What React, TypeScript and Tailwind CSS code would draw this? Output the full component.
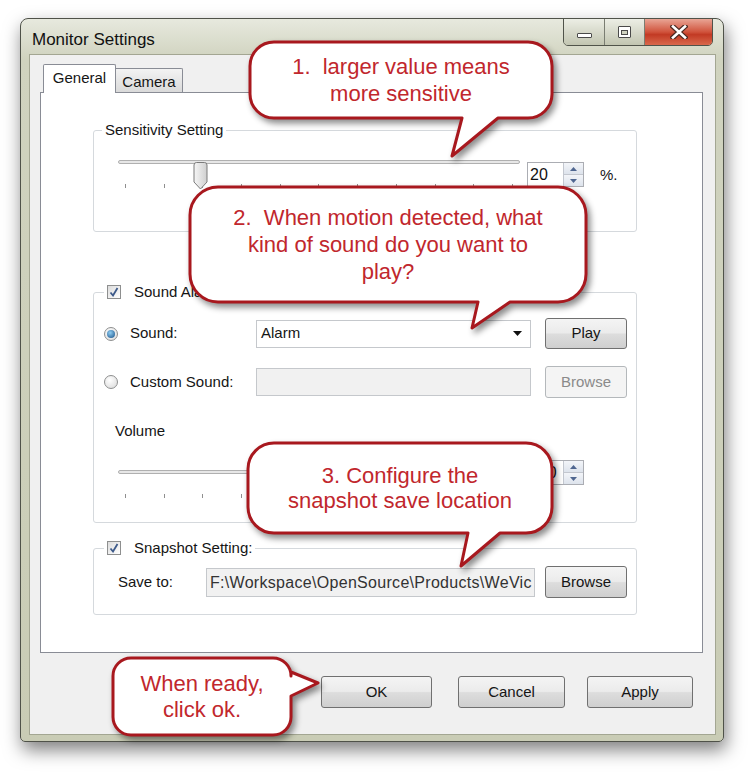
import React from 'react';

type Tail = { side: 'bottom' | 'right'; a: number; b: number; tip: [number, number] };
type Callout = { x: number; y: number; w: number; h: number; r: number; tail: Tail; lines: string[]; lh: number };

// speech bubbles drawn over the dialog
const CALLOUTS: Callout[] = [
  { x: 250, y: 42, w: 302, h: 76, r: 24, tail: { side: 'bottom', a: 462, b: 498, tip: [452, 156] }, lines: ['1.  larger value means', 'more sensitive'], lh: 27 },
  { x: 190, y: 187, w: 396, h: 115, r: 28, tail: { side: 'bottom', a: 478, b: 510, tip: [472, 328] }, lines: ['2.  When motion detected, what', 'kind of sound do you want to', 'play?'], lh: 27 },
  { x: 248, y: 443, w: 304, h: 90, r: 26, tail: { side: 'bottom', a: 468, b: 500, tip: [461, 566] }, lines: ['3. Configure the', 'snapshot save location'], lh: 25 },
  { x: 113, y: 658, w: 178, h: 77, r: 18, tail: { side: 'right', a: 672, b: 696, tip: [318, 683] }, lines: ['When ready,', 'click ok.'], lh: 26 },
];

const bubblePath = (c: Callout) => {
  const { x, y, w, h, r, tail } = c;
  const R = x + w;
  const B = y + h;
  let d = `M${x + r},${y} H${R - r} A${r},${r} 0 0 1 ${R},${y + r}`;
  if (tail.side === 'right') d += ` V${tail.a} L${tail.tip[0]},${tail.tip[1]} L${R},${tail.b}`;
  d += ` V${B - r} A${r},${r} 0 0 1 ${R - r},${B}`;
  if (tail.side === 'bottom') d += ` H${tail.b} L${tail.tip[0]},${tail.tip[1]} L${tail.a},${B}`;
  d += ` H${x + r} A${r},${r} 0 0 1 ${x},${B - r} V${y + r} A${r},${r} 0 0 1 ${x + r},${y} Z`;
  return d;
};

const Checkbox = () => (
  <div className="flex h-[14px] w-[14px] items-center justify-center border border-[#8e8f8f] bg-[linear-gradient(135deg,#dcdcdc,#ffffff)]">
    <svg width="10" height="10" viewBox="0 0 10 10">
      <path d="M1.5,5.5 L4,8.5 L8.5,1" fill="none" stroke="#3d5a8a" strokeWidth="1.8" />
    </svg>
  </div>
);

const Radio = ({ checked }: { checked?: boolean }) => (
  <div className="flex h-[14px] w-[14px] items-center justify-center rounded-full border border-[#8e8f8f] bg-[radial-gradient(circle_at_40%_35%,#ffffff,#d8d8d8)]">
    {checked && <div className="h-[8px] w-[8px] rounded-full bg-[radial-gradient(circle_at_40%_35%,#8fcdf2,#174f86)]" />}
  </div>
);

const Btn = ({ children, className = '', disabled = false }: { children: React.ReactNode; className?: string; disabled?: boolean }) => (
  <div
    className={`flex items-center justify-center rounded-[3px] border text-[15px] ${
      disabled
        ? 'border-[#b4b8bb] bg-[#f4f4f4] text-[#8a8a8a]'
        : 'border-[#707070] bg-[linear-gradient(to_bottom,#f4f4f4_0%,#ebebeb_48%,#dddddd_52%,#cfcfcf_100%)] text-[#151515]'
    } ${className}`}
  >
    {children}
  </div>
);

const Numeric = ({ value }: { value: number }) => (
  <div className="flex h-[25px] w-[57px] border border-[#abadb3] bg-white">
    <div className="flex-1 pl-[2px] text-[16px] leading-[23px] text-[#111]">{value}</div>
    <div className="flex w-[20px] flex-col border-l border-[#c3c7cf]">
      <div className="flex flex-1 items-center justify-center border-b border-[#c3c7cf] bg-[linear-gradient(to_bottom,#f3f5f9,#dde3ec)]">
        <svg width="7" height="4" viewBox="0 0 7 4"><path d="M0,4 L3.5,0 L7,4 Z" fill="#4f6690" /></svg>
      </div>
      <div className="flex flex-1 items-center justify-center bg-[linear-gradient(to_bottom,#f3f5f9,#dde3ec)]">
        <svg width="7" height="4" viewBox="0 0 7 4"><path d="M0,0 L3.5,4 L7,0 Z" fill="#4f6690" /></svg>
      </div>
    </div>
  </div>
);

const Slider = ({ value }: { value: number }) => (
  <div className="relative h-[40px] w-[402px]">
    <div className="mt-[10px] h-[4px] rounded-[2px] border border-[#b0b0b0] bg-[#e7e7e7]" />
    <div className="mt-[20px] flex justify-between px-[7px]">
      {Array.from({ length: 11 }).map((_, i) => (
        <div key={i} className="h-[4px] w-px bg-[#8f8f8f]" />
      ))}
    </div>
    <svg className="absolute top-[2px]" style={{ left: 7 + value * 3.88 - 10 }} width="15" height="28" viewBox="0 0 15 28">
      <defs>
        <linearGradient id="thumb" x1="0" y1="0" x2="1" y2="0">
          <stop offset="0" stopColor="#f6f6f6" />
          <stop offset="1" stopColor="#cfcfcf" />
        </linearGradient>
      </defs>
      <path d="M1,3 Q1,0.5 3.5,0.5 H11.5 Q14,0.5 14,3 V20 L7.5,27 L1,20 Z" fill="url(#thumb)" stroke="#7b7b7b" />
    </svg>
  </div>
);

const WindowButtons = () => (
  <div className="-mt-px flex h-[28px] overflow-hidden rounded-b-[5px] border border-[#50534a]">
    <div className="flex w-[41px] items-center justify-center border-r border-[#7a7d72] bg-[linear-gradient(to_bottom,#eceee5,#c2c5b1)]">
      <div className="mt-[6px] h-[5px] w-[15px] rounded-[1px] border border-[#4a4a4a] bg-white" />
    </div>
    <div className="flex w-[40px] items-center justify-center border-r border-[#7a7d72] bg-[linear-gradient(to_bottom,#eceee5,#c2c5b1)]">
      <div className="flex h-[12px] w-[13px] items-center justify-center rounded-[1px] border border-[#4a4a4a] bg-white">
        <div className="h-[5px] w-[7px] border border-[#4a4a4a] bg-[#cfd2c0]" />
      </div>
    </div>
    <div className="flex w-[67px] items-center justify-center bg-[linear-gradient(to_bottom,#e9a595_0%,#d0533c_50%,#c23a24_60%,#d9684c_100%)]">
      <svg width="18" height="14" viewBox="0 0 18 14">
        <path d="M3,1.5 L15,12.5 M15,1.5 L3,12.5" stroke="#4a2a22" strokeWidth="5" strokeLinecap="square" />
        <path d="M3,1.5 L15,12.5 M15,1.5 L3,12.5" stroke="#ffffff" strokeWidth="2.6" strokeLinecap="square" />
      </svg>
    </div>
  </div>
);

const App: React.FC = () => {
  return (
    <div className="relative h-[772px] w-[750px] overflow-hidden bg-white pl-[20px] pt-[18px] font-['Liberation_Sans',Arial,sans-serif] text-[#151515]">
      {/* window */}
      <div className="flex h-[724px] w-[704px] flex-col rounded-b-[5px] rounded-t-[8px] border border-[#4f5249] bg-[linear-gradient(to_bottom,#e7e9de_0px,#d0d3bf_40px,#c9ccb5_100%)] shadow-[2px_8px_18px_rgba(0,0,0,0.5)]">
        <div className="flex h-[36px] items-start justify-between pl-[11px] pr-[10px]">
          <div className="pt-[11px] text-[17px] leading-[20px] text-[#111]">Monitor Settings</div>
          <WindowButtons />
        </div>

        {/* client area */}
        <div className="ml-[9px] mr-[8px] flex h-[679px] flex-col bg-[#f0f0f0] pl-[10px] pr-[12px] pt-[9px] outline outline-1 outline-[#a3a692]">
          <div className="ml-[3px] flex h-[28px] items-end">
            <div className="relative z-10 -mb-px flex h-[29px] w-[73px] justify-center rounded-t-[2px] border-x border-t border-[#898c95] bg-white pt-[4px] text-[15px] leading-[18px]">
              General
            </div>
            <div className="flex h-[24px] w-[67px] justify-center rounded-tr-[2px] border-r border-t border-[#898c95] bg-[linear-gradient(to_bottom,#f3f3f3,#dadada)] pt-[4px] text-[15px] leading-[18px]">
              Camera
            </div>
          </div>

          {/* tab page */}
          <div className="h-[561px] w-[663px] border border-[#898c95] bg-white pl-[52px] pt-[28px]">
            <fieldset className="h-[111px] w-[544px] rounded-[3px] border border-[#d5d9dd]">
              <legend className="ml-[8px] px-[3px] text-[15px] leading-[18px]">Sensitivity Setting</legend>
              <div className="mt-[11px] flex items-start">
                <div className="ml-[24px]">
                  <Slider value={20} />
                </div>
                <div className="ml-[7px] mt-[12px]">
                  <Numeric value={20} />
                </div>
                <div className="ml-[16px] mt-[16px] text-[15px] leading-[18px]">%.</div>
              </div>
            </fieldset>

            <fieldset className="mt-[51px] h-[240px] w-[544px] rounded-[3px] border border-[#d5d9dd]">
              <legend className="ml-[10px] px-[3px]">
                <div className="flex h-[18px] items-center gap-[13px] text-[15px] leading-[18px]">
                  <Checkbox />
                  <span>Sound Alarm</span>
                </div>
              </legend>
              <div className="mt-[17px] flex h-[31px] items-center">
                <div className="flex w-[162px] items-center pl-[10px]">
                  <Radio checked />
                  <span className="ml-[12px] text-[15px]">Sound:</span>
                </div>
                <div className="flex h-[28px] w-[275px] items-center justify-between border border-[#c5c8cc] bg-white pl-[4px] pr-[8px] text-[15px]">
                  <span>Alarm</span>
                  <svg width="9" height="5" viewBox="0 0 9 5"><path d="M0,0 L9,0 L4.5,5 Z" fill="#111" /></svg>
                </div>
                <Btn className="ml-[14px] h-[31px] w-[82px]">Play</Btn>
              </div>
              <div className="mt-[17px] flex h-[32px] items-center">
                <div className="flex w-[162px] items-center pl-[10px]">
                  <Radio />
                  <span className="ml-[12px] text-[15px]">Custom Sound:</span>
                </div>
                <div className="h-[28px] w-[275px] border border-[#c5c8cc] bg-[#f1f1f1]" />
                <Btn disabled className="ml-[14px] h-[32px] w-[82px]">Browse</Btn>
              </div>
              <div className="ml-[21px] mt-[24px] text-[15px] leading-[18px]">Volume</div>
              <div className="mt-[20px] flex items-start">
                <div className="ml-[24px]">
                  <Slider value={100} />
                </div>
                <div className="ml-[7px]">
                  <Numeric value={100} />
                </div>
              </div>
            </fieldset>

            <fieldset className="mt-[16px] h-[76px] w-[544px] rounded-[3px] border border-[#d5d9dd]">
              <legend className="ml-[10px] px-[3px]">
                <div className="flex h-[18px] items-center gap-[13px] text-[15px] leading-[18px]">
                  <Checkbox />
                  <span>Snapshot Setting:</span>
                </div>
              </legend>
              <div className="mt-[9px] flex h-[32px] items-center">
                <div className="w-[112px] pl-[24px] text-[15px]">Save to:</div>
                <div className="h-[29px] w-[329px] overflow-hidden whitespace-nowrap border border-[#c5c8cc] bg-[#f1f1f1] pl-[3px] text-[16px] leading-[27px] tracking-[0.3px] text-[#333]">
                  F:\Workspace\OpenSource\Products\WeVic
                </div>
                <Btn className="ml-[10px] h-[32px] w-[82px]">Browse</Btn>
              </div>
            </fieldset>
          </div>

          <div className="mr-[10px] mt-[23px] flex justify-end">
            <Btn className="h-[32px] w-[111px]">OK</Btn>
            <Btn className="ml-[26px] h-[32px] w-[107px]">Cancel</Btn>
            <Btn className="ml-[22px] h-[32px] w-[106px]">Apply</Btn>
          </div>
        </div>
      </div>

      {/* callouts */}
      <svg className="pointer-events-none absolute left-0 top-0 drop-shadow-[3px_4px_3px_rgba(0,0,0,0.45)]" width="750" height="772">
        {CALLOUTS.map((c, i) => (
          <path key={i} d={bubblePath(c)} fill="#ffffff" stroke="#a8181e" strokeWidth="3" strokeLinejoin="round" />
        ))}
      </svg>
      {CALLOUTS.map((c, i) => (
        <div
          key={i}
          className="absolute flex flex-col items-center justify-center whitespace-pre text-[22px] text-[#c1272d]"
          style={{ left: c.x, top: c.y, width: c.w, height: c.h, lineHeight: `${c.lh}px` }}
        >
          {c.lines.map((l, j) => (
            <div key={j}>{l}</div>
          ))}
        </div>
      ))}
    </div>
  );
};

export default App;
